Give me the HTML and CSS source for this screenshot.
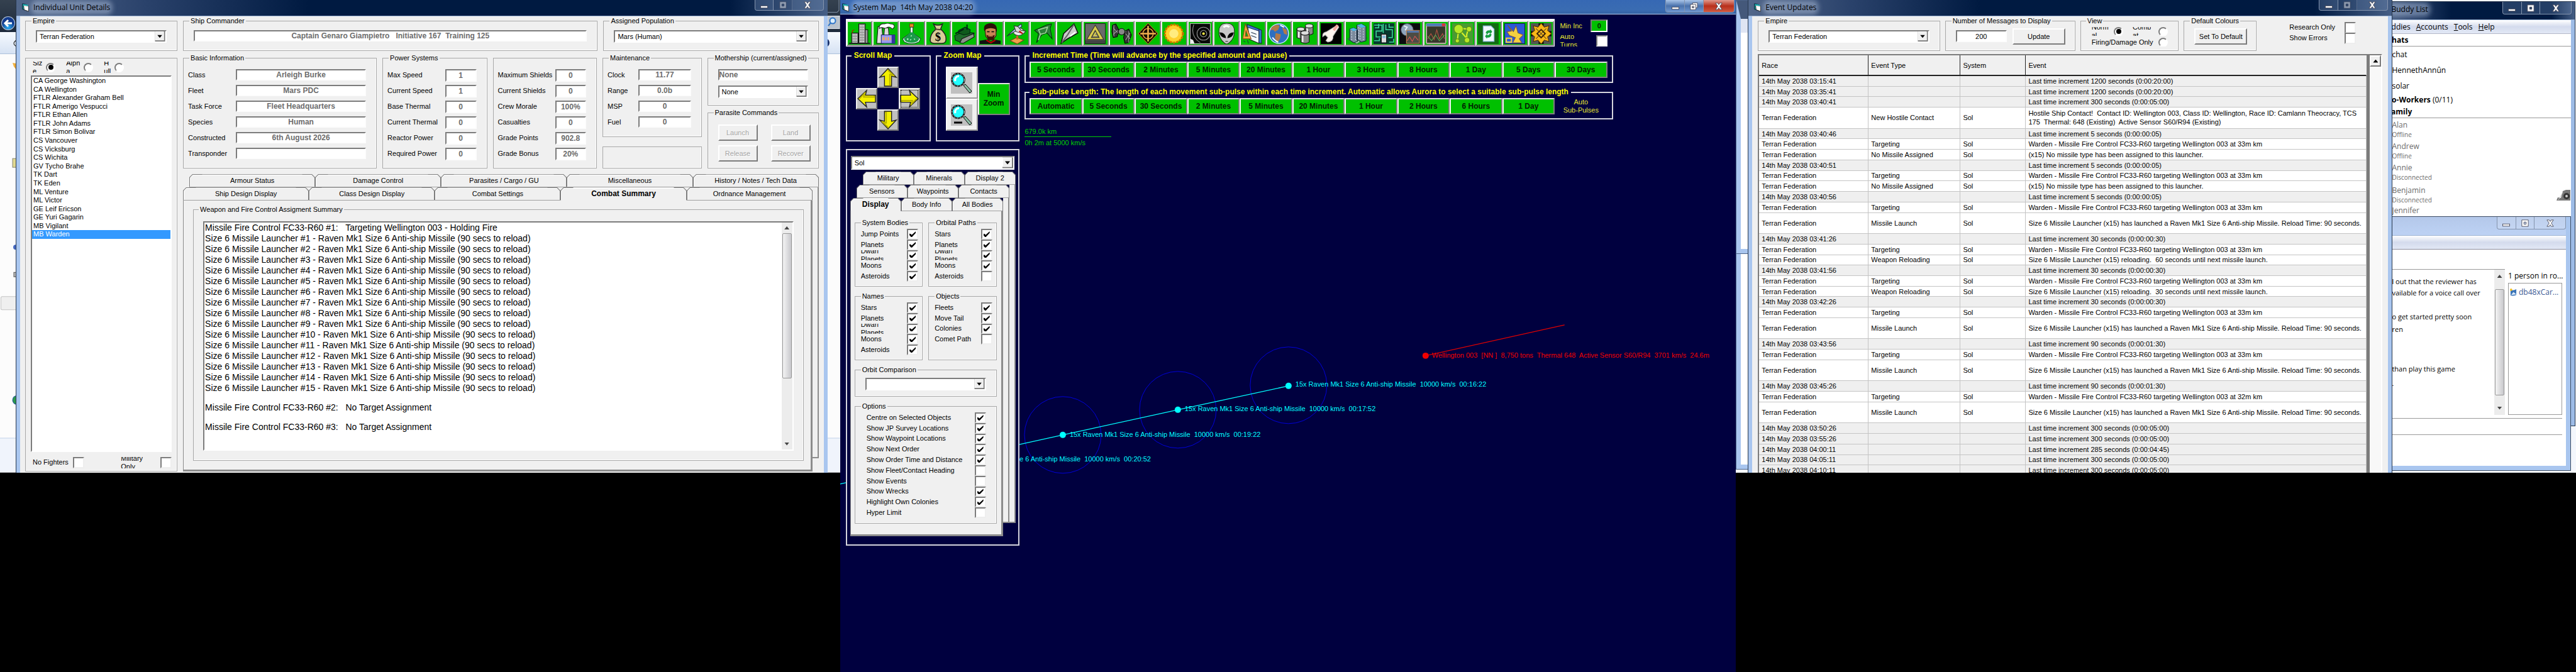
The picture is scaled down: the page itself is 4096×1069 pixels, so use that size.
FILE: index.html
```html
<!DOCTYPE html>
<html lang="en">
<head>
<meta charset="utf-8">
<title>System Map</title>
<link rel="stylesheet" href="styles.css">
</head>
<body>
<svg class="defs" width="0" height="0" aria-hidden="true">
  <symbol id="app" viewBox="0 0 16 16"><path d="M2 1l8 2v11l-8-3z" fill="#10a0a0" stroke="#012"/><path d="M4 4l9 1v10l-8-3z" fill="#fff" stroke="#222"/><path d="M3 2l9 1v2L3 4z" fill="#2cc"/></symbol>
  <symbol id="min" viewBox="0 0 20 14"><rect x="3.500" y="8.500" width="13" height="4" fill="#fff" stroke="#445"/></symbol>
  <symbol id="max" viewBox="0 0 20 14"><path fill-rule="evenodd" d="M4 1h12v12H4zM8 5v4h4V5z" fill="#fff" stroke="#445"/></symbol>
  <symbol id="restore" viewBox="0 0 20 14"><path d="M8 .5h9v9H8z" fill="#fff" stroke="#445"/><path fill-rule="evenodd" d="M4 3.500h10v10H4zM7.500 7v3h3V7z" fill="#fff" stroke="#445"/></symbol>
  <symbol id="close" viewBox="0 0 20 14"><path d="M4 1h4l2 3 2-3h4l-4 6 4 6h-4l-2-3-2 3H4l4-6z" fill="#fff" stroke="#445"/></symbol>
  <symbol id="arrow" viewBox="0 0 32 32"><path d="M16 1L30 16l-8-2v17H10V14l-8 2z" fill="#f4f000" stroke="#222" stroke-width="1.500"/><path d="M16 4l9 8-6-1v18h2" fill="none" stroke="#b8b000" stroke-width="2"/></symbol>
  <symbol id="lens" viewBox="0 0 34 34"><rect width="34" height="34" fill="#c0c0c0"/><path d="M20 21l3-2 10 11-3 3z" fill="#8fc0a8" stroke="#000"/><circle cx="11.500" cy="12" r="10" fill="#2ff" stroke="#111" stroke-width="2.500"/><circle cx="11.500" cy="12" r="10" fill="none" stroke="#ccc" stroke-width="1" stroke-dasharray="3 2"/><path d="M7 14a6 6 0 0 1 6-8" fill="none" stroke="#fff" stroke-width="3"/></symbol>
</svg>
<main class="desktop">

<section class="monitor left">
  <svg class="strip" viewBox="0 0 26 751" preserveAspectRatio="xMinYMin slice" aria-hidden="true">
    <defs><linearGradient id="bar" x2="0" y2="1"><stop stop-color="#f6faff"/><stop offset="1" stop-color="#d6e2f3"/></linearGradient>
    <linearGradient id="night" x2="0" y2="1"><stop stop-color="#35414f"/><stop offset="1" stop-color="#1d2a3c"/></linearGradient>
    <radialGradient id="orb" cy=".8"><stop stop-color="#2bb0f5"/><stop offset="1" stop-color="#123a8c"/></radialGradient></defs>
    <rect width="26" height="751" fill="#fcfcfc"/><rect width="26" height="51" fill="url(#night)"/>
    <circle cx="13" cy="37" r="10.500" fill="url(#orb)" stroke="#b8c8dc"/><path d="M19 37H8m5-5l-5 5 5 5" fill="none" stroke="#fff" stroke-width="3"/>
    <rect y="51" width="26" height="34" fill="url(#bar)"/><path d="M0 85.500h26" stroke="#a9bfda"/>
    <path d="M26 64q-8 5 0 10" fill="none" stroke="#222"/><path d="M20 100l6 1v10l-4-5z" fill="#f0b040"/>
    <rect x="20" y="252" width="6" height="14" fill="#e0d890" stroke="#887"/><circle cx="25" cy="393" r="4" fill="#4467c0"/><rect x="22" y="433" width="4" height="7" fill="#bbb" stroke="#555"/>
    <rect x="1.500" y="471.500" width="30" height="21" rx="2" fill="#efefef" stroke="#c4c4c4"/><circle cx="27" cy="636" r="7" fill="#2a9a4a" stroke="#24509c"/>
    <rect y="696" width="26" height="55" fill="#f0f4fc"/><path d="M0 696.500h26" stroke="#c3d3e8"/>
  </svg>
  <div class="window">
    <header class="titlebar navy"><svg class="appicon"><use href="#app"/></svg><h1>Individual Unit Details</h1>
      <div class="caption"><button aria-label="Minimize"><svg><use href="#min"/></svg></button><button aria-label="Maximize" disabled><svg><use href="#max"/></svg></button><button aria-label="Close"><svg><use href="#close"/></svg></button></div></header>
    <div class="unit">
      <fieldset class="one"><legend>Empire</legend><select aria-label="Empire"><option>Terran Federation</option></select></fieldset>
      <div class="top-right">
        <fieldset class="one"><legend>Ship Commander</legend><input class="val" aria-label="Ship Commander" readonly value="Captain Genaro Giampietro   Initiative 167  Training 125"></fieldset>
        <fieldset class="one"><legend>Assigned Population</legend><select aria-label="Assigned Population"><option>Mars (Human)</option></select></fieldset>
      </div>
      <div class="group ships">
        <div class="sorts">
          <label><span class="cut"><span>Siz</span><span>e</span></span><input type="radio" name="sort" checked></label>
          <label><span class="cut"><span>Alph</span><span>a</span></span><input type="radio" name="sort"></label>
          <label><span class="cut"><span>H</span><span>ull</span></span><input type="radio" name="sort"></label>
        </div>
        <div class="listbox"><ul>
          <li>CA George Washington</li><li>CA Wellington</li><li>FTLR Alexander Graham Bell</li><li>FTLR Amerigo Vespucci</li><li>FTLR Ethan Allen</li><li>FTLR John Adams</li><li>FTLR Simon Bolivar</li><li>CS Vancouver</li><li>CS Vicksburg</li><li>CS Wichita</li><li>GV Tycho Brahe</li><li>TK Dart</li><li>TK Eden</li><li>ML Venture</li><li>ML Victor</li><li>GE Leif Ericson</li><li>GE Yuri Gagarin</li><li>MB Vigilant</li><li class="selected">MB Warden</li>
        </ul></div>
        <div class="filters"><label>No Fighters<input type="checkbox"></label><label><span class="cut"><span>Military</span><span>Only</span></span><input type="checkbox"></label></div>
      </div>
      <div class="details">
        <div class="info">
          <fieldset class="rows basic"><legend>Basic Information</legend>
            <label>Class<input class="val" readonly value="Arleigh Burke"></label><label>Fleet<input class="val" readonly value="Mars PDC"></label><label>Task Force<input class="val" readonly value="Fleet Headquarters"></label><label>Species<input class="val" readonly value="Human"></label><label>Constructed<input class="val" readonly value="6th August 2026"></label><label>Transponder<input class="val" readonly value=""></label></fieldset>
          <fieldset class="rows tall"><legend>Power Systems</legend>
            <label>Max Speed<input class="val" readonly value="1"></label><label>Current Speed<input class="val" readonly value="1"></label><label>Base Thermal<input class="val" readonly value="0"></label><label>Current Thermal<input class="val" readonly value="0"></label><label>Reactor Power<input class="val" readonly value="0"></label><label>Required Power<input class="val" readonly value="0"></label></fieldset>
          <div class="group rows tall">
            <label>Maximum Shields<input class="val" readonly value="0"></label><label>Current Shields<input class="val" readonly value="0"></label><label>Crew Morale<input class="val" readonly value="100%"></label><label>Casualties<input class="val" readonly value="0"></label><label>Grade Points<input class="val" readonly value="902.8"></label><label>Grade Bonus<input class="val" readonly value="20%"></label></div>
          <div class="stack">
            <fieldset class="rows upkeep"><legend>Maintenance</legend>
              <label>Clock<input class="val" readonly value="11.77"></label><label>Range<input class="val" readonly value="0.0b"></label><label>MSP<input class="val" readonly value="0"></label><label>Fuel<input class="val" readonly value="0"></label></fieldset>
            <div class="group blank"></div>
          </div>
          <div class="stack">
            <fieldset class="mother"><legend>Mothership (current/assigned)</legend><input class="val start" aria-label="Current mothership" readonly value="None"><select aria-label="Assigned mothership"><option>None</option></select></fieldset>
            <fieldset class="parasite"><legend>Parasite Commands</legend><button class="btn" disabled>Launch</button><button class="btn" disabled>Land</button><button class="btn" disabled>Release</button><button class="btn" disabled>Recover</button></fieldset>
          </div>
        </div>
        <div class="tabset">
          <div class="tabs inset1"><button>Armour Status</button><button>Damage Control</button><button>Parasites / Cargo / GU</button><button>Miscellaneous</button><button>History / Notes / Tech Data</button></div>
          <div class="deck"><div class="sheet">
            <div class="tabs"><button>Ship Design Display</button><button>Class Design Display</button><button>Combat Settings</button><button class="on">Combat Summary</button><button>Ordnance Management</button></div>
            <div class="page combat">
              <fieldset><legend>Weapon and Fire Control Assigment Summary</legend>
                <div class="report"><ul>
                  <li>Missile Fire Control FC33-R60 #1:   Targeting Wellington 003 - Holding Fire</li>
                  <li>Size 6 Missile Launcher #1 - Raven Mk1 Size 6 Anti-ship Missile (90 secs to reload)</li>
                  <li>Size 6 Missile Launcher #2 - Raven Mk1 Size 6 Anti-ship Missile (90 secs to reload)</li>
                  <li>Size 6 Missile Launcher #3 - Raven Mk1 Size 6 Anti-ship Missile (90 secs to reload)</li>
                  <li>Size 6 Missile Launcher #4 - Raven Mk1 Size 6 Anti-ship Missile (90 secs to reload)</li>
                  <li>Size 6 Missile Launcher #5 - Raven Mk1 Size 6 Anti-ship Missile (90 secs to reload)</li>
                  <li>Size 6 Missile Launcher #6 - Raven Mk1 Size 6 Anti-ship Missile (90 secs to reload)</li>
                  <li>Size 6 Missile Launcher #7 - Raven Mk1 Size 6 Anti-ship Missile (90 secs to reload)</li>
                  <li>Size 6 Missile Launcher #8 - Raven Mk1 Size 6 Anti-ship Missile (90 secs to reload)</li>
                  <li>Size 6 Missile Launcher #9 - Raven Mk1 Size 6 Anti-ship Missile (90 secs to reload)</li>
                  <li>Size 6 Missile Launcher #10 - Raven Mk1 Size 6 Anti-ship Missile (90 secs to reload)</li>
                  <li>Size 6 Missile Launcher #11 - Raven Mk1 Size 6 Anti-ship Missile (90 secs to reload)</li>
                  <li>Size 6 Missile Launcher #12 - Raven Mk1 Size 6 Anti-ship Missile (90 secs to reload)</li>
                  <li>Size 6 Missile Launcher #13 - Raven Mk1 Size 6 Anti-ship Missile (90 secs to reload)</li>
                  <li>Size 6 Missile Launcher #14 - Raven Mk1 Size 6 Anti-ship Missile (90 secs to reload)</li>
                  <li>Size 6 Missile Launcher #15 - Raven Mk1 Size 6 Anti-ship Missile (90 secs to reload)</li>
                  <li></li>
                  <li>Missile Fire Control FC33-R60 #2:   No Target Assignment</li>
                  <li></li>
                  <li>Missile Fire Control FC33-R60 #3:   No Target Assignment</li>
                </ul><div class="scroll"><b class="up"></b><div class="thumb"></div><b class="down"></b></div></div>
              </fieldset>
            </div>
          </div><div class="edge"></div></div>
        </div>
      </div>
    </div>
  </div>
  <svg class="strip" viewBox="0 0 20 751" preserveAspectRatio="xMinYMin slice" aria-hidden="true">
    <rect width="20" height="751" fill="#fcfcfc"/><rect width="20" height="51" fill="url(#night)"/><path d="M0 19.500h15l3-3V0" fill="none" stroke="#8090a4"/>
    <rect x="0" y="25.500" width="19" height="20" fill="#b9c2cd" stroke="#e4e8ee"/><circle cx="8" cy="33" r="4.500" fill="#dbeefc" stroke="#2e74c8" stroke-width="2"/><path d="M5 36l-4 5" stroke="#2e74c8" stroke-width="2"/>
    <rect y="51" width="20" height="34" fill="url(#bar)"/><circle cx="-4" cy="68" r="7" fill="#16306c"/><path d="M0 85.500h20" stroke="#a9bfda"/>
    <rect y="696" width="20" height="55" fill="#f0f4fc"/><path d="M0 696.500h20" stroke="#c3d3e8"/>
  </svg>
</section>

<section class="monitor map">
  <svg class="chart" viewBox="0 0 1425 1069" preserveAspectRatio="xMinYMin meet">
    <g fill="none" stroke="#0000d8"><circle cx="354" cy="692" r="61"/><circle cx="537" cy="652" r="61"/><circle cx="713" cy="613" r="61"/></g>
    <path d="M0 770L354 692 537 652 713 614" fill="none" stroke="#0ff" stroke-width="1.300"/>
    <path d="M931 566L1152 517" stroke="#e00000" stroke-width="1.300"/>
    <g fill="#0ff"><circle cx="354" cy="692" r="5"/><circle cx="537" cy="652" r="5"/><circle cx="713" cy="614" r="5"/>
    <text x="724" y="615">15x Raven Mk1 Size 6 Anti-ship Missile  10000 km/s  00:16:22</text>
    <text x="548" y="654">15x Raven Mk1 Size 6 Anti-ship Missile  10000 km/s  00:17:52</text>
    <text x="365" y="695">15x Raven Mk1 Size 6 Anti-ship Missile  10000 km/s  00:19:22</text>
    <text x="494" y="734" text-anchor="end">e 6 Anti-ship Missile  10000 km/s  00:20:52</text></g>
    <g fill="#f00000"><circle cx="931" cy="566" r="5"/><text x="941" y="569">Wellington 003  [NN ]  8,750 tons  Thermal 648  Active Sensor S60/R94  3701 km/s  24.6m</text></g>
  </svg>
  <header class="titlebar sky"><svg class="appicon"><use href="#app"/></svg><h1>System Map  14th May 2038 04:20</h1>
    <div class="caption lit"><button aria-label="Minimize"><svg><use href="#min"/></svg></button><button aria-label="Restore"><svg><use href="#restore"/></svg></button><button class="red" aria-label="Close"><svg><use href="#close"/></svg></button></div></header>
  <div class="space">
    <div class="bar-row">
      <nav class="toolbar">
        <button aria-label="Population"><svg viewBox="0 0 32 32"><path d="M15 1h10v30H15zM4 15h10v16H4zM25 10h4v21h-4z" fill="#999" stroke="#111"/><path d="M17.500 3v27M20 3v27M22.500 3v27M6.500 17v13M9 17v13M11.500 17v13" stroke="#fff" stroke-dasharray="2 2"/><path d="M0 31h32" stroke="#222" stroke-width="2"/><path d="M5 15v-3l3-2" stroke="#c00" fill="none"/></svg></button>
        <button aria-label="Industry"><svg viewBox="0 0 32 32"><path d="M4 5h6l2 26H2zM14 7h6l1 14h-8z" fill="#ddd" stroke="#111"/><path d="M6 5q2-5 8-4 5-2 9 0 7 0 6 5l-3 3q-3-4-7-3-4 3-7 1-3-1-6 1z" fill="#fff" stroke="#222"/><path d="M9 18h21v13H9z" fill="#9a9af0" stroke="#22226a"/><path d="M25 18h5v13h-5z" fill="#3434a0"/><path d="M11 24h13" stroke="#ffb040" stroke-width="5" stroke-dasharray="2 2"/></svg></button>
        <button aria-label="Research"><svg viewBox="0 0 32 32"><path d="M13 1h6v5h-6z" fill="#e88820" stroke="#732"/><path d="M14 6v9L2 24l3 5q11 5 22 0l3-5-12-9V6z" fill="#e6fff0" stroke="#243"/><path d="M14 14L4 24l3 4q9 4 18 0l3-4-10-10z" fill="#1a9a48"/><path d="M9 24l2 1m4-6l1 1m4 5l1-1m-7 1l1 1" stroke="#bfc" stroke-width="2"/></svg></button>
        <button aria-label="Wealth"><svg viewBox="0 0 32 32"><path d="M9 1q7 4 14 0l-3 8q10 8 8 18-1 4-6 4H10q-6 0-6-5Q4 16 13 9z" fill="#d8cc98" stroke="#222" stroke-width="1.500"/><path d="M11 9l9 1" stroke="#543" stroke-width="2"/><text x="16" y="27" text-anchor="middle" font-size="18" font-weight="bold" font-family="Liberation Serif, serif">$</text></svg></button>
        <button aria-label="Ground Units"><svg viewBox="0 0 32 32"><path d="M1 19l13-6 17 2-1 6-18 9-10-4z" fill="#1d6a2a" stroke="#021"/><path d="M12 24l18-8 1 5-17 10-5-1z" fill="#8a938a" stroke="#111"/><path d="M7 11l10-5 8 4-1 6-9 2-8-3z" fill="#0e5a1c" stroke="#021"/><path d="M15 9L2 16M20 2v8" stroke="#021" stroke-width="2"/></svg></button>
        <button aria-label="Officers"><svg viewBox="0 0 32 32"><path d="M8 10q0-9 9-9 8 1 8 10v8l-4 6h-8l-4-5z" fill="#c98455" stroke="#2a1208"/><path d="M7 12Q4 1 16 0q12 0 10 14l-2-5q-7-3-14 0z" fill="#2c0c08"/><path d="M10 18q7 3 13 0l-2 8h-8z" fill="#3a1208"/><path d="M13 20h7" stroke="#c98455"/><path d="M11 13h4m3 0h4" stroke="#000" stroke-width="1.500"/><path d="M0 32v-5l12-2 5 3 5-3 10 2v5z" fill="#111"/><path d="M10 26l7 4 7-4" stroke="#b00" fill="none" stroke-width="2"/></svg></button>
        <button aria-label="Fighters"><svg viewBox="0 0 32 32"><path d="M6 27l10-5 11 4-10 6z" fill="#f0a048" stroke="#742"/><path d="M17 16v9" stroke="#c66a20" stroke-width="3"/><ellipse cx="19" cy="13" rx="8" ry="6" fill="#eee" stroke="#444"/><path d="M1 20L16 6l7-5 1 4-8 6z" fill="#a8cff0" stroke="#223"/><path d="M12 4l6 1 5 6 7 1-3 4-12-3z" fill="#d8d8d8" stroke="#333"/><path d="M20 12l5 4" stroke="#c00" stroke-width="2"/></svg></button>
        <button aria-label="Ship Design"><svg viewBox="0 0 32 32"><path d="M3 11L21 3l8-2-2 7 3 16-8-9-8 3-8 12 3-14z" fill="#2f7d3c" stroke="#042a0c"/><path d="M9 10l14-4-3 9-8 2zM9 26l3-9" fill="none" stroke="#a5d6a0" stroke-width="1.500"/></svg></button>
        <button aria-label="Fleets"><svg viewBox="0 0 32 32"><path d="M24 1l6 14-16 9-10 7 4-15z" fill="#ccc" stroke="#111" stroke-width="1.500"/><path d="M24 2L14 18 5 30" fill="none" stroke="#666" stroke-width="2"/><path d="M18 20l8-6" stroke="#fff" stroke-width="2"/></svg></button>
        <button aria-label="Task Groups"><svg viewBox="0 0 32 32"><rect x=".5" y=".5" width="31" height="31" fill="#6a6a6a" stroke="#222"/><path d="M1 26h30v5H1z" fill="#444"/><path fill-rule="evenodd" d="M16 3l13 22H3zM16 11l-6 11h12z" fill="#d8cc50" stroke="#332"/><path d="M17 14l-3 5h5" fill="none" stroke="#d8cc50" stroke-width="2"/></svg></button>
        <button aria-label="Squadrons"><svg viewBox="0 0 32 32"><path d="M2 3l5-2 5 10-3 10-6 1-2-9zM21 12l6-3 4 9-4 12-6 1-2-9z" fill="#333" stroke="#000"/><path d="M3 7l7 8M3 17l7-6M22 16l7 8m-7 2l7-11M4 3v17M27 12v18" stroke="#aaa"/><path d="M9 13h14" stroke="#555" stroke-width="3"/><circle cx="16" cy="13" r="5" fill="#888" stroke="#111"/></svg></button>
        <button aria-label="Combat"><svg viewBox="0 0 32 32"><path d="M16 0l15 16-15 16L1 16z" fill="#160c00" stroke="#b87820"/><circle cx="16" cy="16" r="8" fill="none" stroke="#e8a040" stroke-width="1.500"/><path d="M16 4v24M4 16h24" stroke="#f0b050" stroke-width="2.500"/></svg></button>
        <button aria-label="System View"><svg viewBox="0 0 32 32"><circle cx="16" cy="16" r="14" fill="#f8b800" stroke="#c87000" stroke-width="3" stroke-dasharray="3 2"/><circle cx="16" cy="16" r="12" fill="#ffd030"/><circle cx="16" cy="16" r="7" fill="#ffec80"/></svg></button>
        <button aria-label="Galactic Map"><svg viewBox="0 0 32 32"><rect x=".5" y=".5" width="31" height="31" fill="#080808" stroke="#bbb"/><g fill="none" stroke="#999"><circle cx="21" cy="16" r="5"/><circle cx="21" cy="16" r="10"/><path d="M6 2q-6 18 10 28"/></g><circle cx="21" cy="16" r="2" fill="#fe4"/><path d="M1 31v-7l4 2 2 5z" fill="#eee"/></svg></button>
        <button aria-label="Aliens"><svg viewBox="0 0 32 32"><path d="M16 0q12 0 12 13 0 10-8 17-4 4-8 0-8-7-8-17Q4 0 16 0z" fill="#c8c8c8" stroke="#222"/><path d="M11 6q5-4 9 0" stroke="#fff" stroke-width="3" fill="none"/><path d="M5 14q9 0 10 9-9-1-10-9zM27 14q-9 0-10 9 9-1 10-9z" fill="#000"/><path d="M14 28h4" stroke="#222"/></svg></button>
        <button aria-label="Class Design"><svg viewBox="0 0 32 32"><path d="M8 2l18 7v22L12 25z" fill="#f4f8ff" stroke="#222"/><path d="M8 2l18 7v3L8 6zM26 9l4 2v20l-4-1z" fill="#3b78d0" stroke="#224"/><path fill-rule="evenodd" d="M5 1l9 23H1zM6 11l-1 9h4z" fill="#f4a83c" stroke="#842"/><path d="M2 27l3 2m3-3l2 5M14 14l8 3m-8 2l8 3" stroke="#234"/></svg></button>
        <button aria-label="Planets"><svg viewBox="0 0 32 32"><circle cx="16" cy="16" r="15" fill="#2d6fc0" stroke="#bfe0ff" stroke-width="1.500"/><path d="M5 6q8-6 12-2l-2 6-5 3-3-3-4 1zM11 15l8 2-1 6-4 7-4-7zM21 6l7 4 1 8-5-2z" fill="#b27a48"/><path d="M6 22q5 6 9 7M18 3l6 3" stroke="#fff" stroke-width="2"/></svg></button>
        <button aria-label="Minerals"><svg viewBox="0 0 32 32"><g fill="#888" stroke="#111"><path d="M16 4v12q6 4 12 0V4zM3 9v13q6 4 12 0V9z"/><ellipse cx="22" cy="4" rx="6" ry="3" fill="#ddd"/><ellipse cx="9" cy="9" rx="6" ry="3" fill="#ddd"/><path d="M9 16v13q7 4 13 0V16z"/><ellipse cx="15.500" cy="15" rx="6.500" ry="3.500" fill="#ddd"/></g><path d="M12 19v10M6 13v9M19 8v5" stroke="#fff" stroke-width="2"/></svg></button>
        <button aria-label="Tech"><svg viewBox="0 0 32 32"><rect width="32" height="32"/><path d="M22 5l4-2 2 3-9 14q1 8-8 9l-3-2 3-5-4-4-4 3q-1-7 6-8z" fill="#fff5ee" stroke="#aaa"/><path d="M20 11l6-8" stroke="#f4a8a0" stroke-width="4"/></svg></button>
        <button aria-label="Shipyards"><svg viewBox="0 0 32 32"><path d="M1 24l17-5 12 4-15 9z" fill="#9ad0a0" stroke="#264"/><path d="M15 3l7-2 7 4v22l-7 2-7-4zM4 9l6-2 6 3v18l-6 2-6-4z" fill="#7c8a9c" stroke="#123"/><path d="M15 3l7-2 7 4-7 2zM4 9l6-2 6 3-6 2z" fill="#4cb8e8"/><path d="M17.500 6v18M20 7v20M25 8v20M7 12v15M13 12v15" stroke="#dfe8f4" stroke-dasharray="2 2"/></svg></button>
        <button aria-label="Intelligence"><svg viewBox="0 0 32 32"><rect width="32" height="32" fill="#07382e"/><path d="M1 3h12v9H4v9h7M19 2v8h10v12h-6M8 1v6H2M24 1v5h7M1 27h8v-4M24 29h7v-5M15 1v14" fill="none" stroke="#3cd89a" stroke-width="1.500"/><path d="M12 17h8v13h-8z" fill="#ddd" stroke="#111"/><path d="M13.500 19h5v4h-5z" fill="#8bd"/></svg></button>
        <button aria-label="Survey"><svg viewBox="0 0 32 32"><rect width="32" height="32" fill="#0c0c10"/><circle cx="12" cy="10" r="9.500" fill="#8fa4bc" stroke="#445"/><path d="M7 4l5 2-3 5" stroke="#e4eef8" stroke-width="2" fill="none"/><rect x="11" y="11" width="20" height="20" fill="#4c4c44" stroke="#c85"/><path d="M12 13h18" stroke="#57a" stroke-width="3"/><path d="M12 27l4-6 4 7 4-8 5 6" fill="none" stroke="#d55"/></svg></button>
        <button aria-label="Statistics"><svg viewBox="0 0 32 32"><rect width="32" height="32" rx="3" fill="#b8a8a0"/><rect x="2" y="5" width="28" height="25" fill="#38382c"/><path d="M1 2.500h30" stroke="#4c78b8" stroke-width="4"/><path d="M25 2.500h5" stroke="#d33" stroke-width="4"/><path d="M3 24l5-8 5 9 4-15 4 14 5-8 3 8" fill="none" stroke="#b54"/><path d="M3 20l6 7 6-9 6 9 8-9" fill="none" stroke="#5a5"/></svg></button>
        <button aria-label="Jump Points"><svg viewBox="0 0 32 32"><rect width="32" height="32" fill="#4a9a34"/><path d="M10 9L8 27M10 9l14 16M12 8l14 1M26 9q-6 8-2 17" stroke="#d8f028" stroke-width="2" fill="none"/><g fill="#b8e828" stroke="#5a8a10"><circle cx="10" cy="9" r="7"/><circle cx="26" cy="9" r="4"/><circle cx="8" cy="27" r="3"/><circle cx="23" cy="26" r="4"/></g></svg></button>
        <button aria-label="Refresh"><svg viewBox="0 0 32 32"><rect width="32" height="32" fill="#126a12"/><path d="M8 4h12l5 5v19H8z" fill="#f0f8ff" stroke="#8cb4dc"/><path d="M12 15q1-5 7-4v-2l3 4-3 4v-2q-4-1-4 2M21 17q-1 6-7 5v2l-3-4 3-4v2q4 1 4-2" fill="#16a040"/></svg></button>
        <button aria-label="Sensors"><svg viewBox="0 0 32 32"><rect x=".5" y=".5" width="31" height="31" fill="#2c58d8" stroke="#124"/><path d="M5 3l9 10 4-9 3 11 8 3-6 6 4 6H13l4-8-9-3-4-6 7-1z" fill="#f4d040" stroke="#754"/><path d="M3 23h8v6H3z" fill="none" stroke="#f4d040" stroke-width="2"/></svg></button>
        <button aria-label="Race"><svg viewBox="0 0 32 32"><rect width="32" height="32" fill="#555"/><path d="M12 0h8v32h-8zM0 12h32v8H0z" fill="#111"/><path fill-rule="evenodd" d="M16 0l5 6 7-2-2 7 6 5-6 5 2 7-7-2-5 6-5-6-7 2 2-7-6-5 6-5-2-7 7 2zM16 9l-7 7 7 7 7-7z" fill="#f8b818" stroke="#542c00"/><path d="M16 11l5 5-5 5-5-5z" fill="#f8b818"/><path d="M8 8l16 16M24 8L8 24" stroke="#432"/></svg></button>
      </nav>
      <div class="turns">
        <label>Min Inc<input class="inc" value="0"></label>
        <label><span class="cut"><span>Auto</span><span>Turns</span></span><input type="checkbox"></label>
      </div>
    </div>
    <div class="controls">
      <fieldset class="frame pad"><legend>Scroll Map</legend><div class="cross">
        <button class="n" aria-label="Up"><svg viewBox="0 0 32 32"><use href="#arrow"/></svg></button>
        <button class="w" aria-label="Left"><svg viewBox="0 0 32 32"><use href="#arrow" transform="rotate(-90 16 16)"/></svg></button>
        <button class="e" aria-label="Right"><svg viewBox="0 0 32 32"><use href="#arrow" transform="rotate(90 16 16)"/></svg></button>
        <button class="s" aria-label="Down"><svg viewBox="0 0 32 32"><use href="#arrow" transform="rotate(180 16 16)"/></svg></button></div></fieldset>
      <fieldset class="frame pad"><legend>Zoom Map</legend><div class="zoom">
        <div class="lenses"><button aria-label="Zoom in"><svg viewBox="0 0 34 34"><use href="#lens"/></svg></button><button aria-label="Zoom out"><svg viewBox="0 0 34 34"><use href="#lens"/><path d="M5 29h13" stroke="#000" stroke-width="3"/></svg></button></div>
        <button class="green">Min<br>Zoom</button></div></fieldset>
      <div class="times">
        <fieldset class="frame"><legend>Increment Time (Time will advance by the specified amount and pause)</legend><div class="eleven">
          <button class="green">5 Seconds</button><button class="green">30 Seconds</button><button class="green">2 Minutes</button><button class="green">5 Minutes</button><button class="green">20 Minutes</button><button class="green">1 Hour</button><button class="green">3 Hours</button><button class="green">8 Hours</button><button class="green">1 Day</button><button class="green">5 Days</button><button class="green">30 Days</button></div></fieldset>
        <fieldset class="frame"><legend>Sub-pulse Length: The length of each movement sub-pulse within each time increment. Automatic allows Aurora to select a suitable sub-pulse length</legend><div class="eleven">
          <button class="green">Automatic</button><button class="green">5 Seconds</button><button class="green">30 Seconds</button><button class="green">2 Minutes</button><button class="green">5 Minutes</button><button class="green">20 Minutes</button><button class="green">1 Hour</button><button class="green">2 Hours</button><button class="green">6 Hours</button><button class="green">1 Day</button><span class="auto">Auto<br>Sub-Pulses</span></div></fieldset>
        <div class="scale"><p>679.0k km</p><p>0h 2m at 5000 km/s</p></div>
      </div>
    </div>
    <aside class="side">
      <select aria-label="System"><option>Sol</option></select>
      <div class="tabs inset2"><button>Military</button><button>Minerals</button><button>Display 2</button></div>
      <div class="deck"><div class="sheet">
        <div class="tabs inset1"><button>Sensors</button><button>Waypoints</button><button>Contacts</button></div>
        <div class="deck"><div class="sheet">
          <div class="tabs"><button class="on">Display</button><button>Body Info</button><button>All Bodies</button></div>
          <div class="page display">
            <fieldset class="checks"><legend>System Bodies</legend><div>
              <label>Jump Points<input type="checkbox" checked></label><label>Planets<input type="checkbox" checked></label><label><span class="cut"><span>Dwarf</span><span>Planets</span></span><input type="checkbox" checked></label><label>Moons<input type="checkbox" checked></label><label>Asteroids<input type="checkbox" checked></label></div></fieldset>
            <fieldset class="checks"><legend>Orbital Paths</legend><div>
              <label>Stars<input type="checkbox" checked></label><label>Planets<input type="checkbox" checked></label><label><span class="cut"><span>Dwarf</span><span>Planets</span></span><input type="checkbox" checked></label><label>Moons<input type="checkbox" checked></label><label>Asteroids<input type="checkbox"></label></div></fieldset>
            <fieldset class="checks"><legend>Names</legend><div>
              <label>Stars<input type="checkbox" checked></label><label>Planets<input type="checkbox" checked></label><label><span class="cut"><span>Dwarf</span><span>Planets</span></span><input type="checkbox" checked></label><label>Moons<input type="checkbox" checked></label><label>Asteroids<input type="checkbox" checked></label></div></fieldset>
            <fieldset class="checks"><legend>Objects</legend><div>
              <label>Fleets<input type="checkbox" checked></label><label>Move Tail<input type="checkbox" checked></label><label>Colonies<input type="checkbox" checked></label><label>Comet Path<input type="checkbox"></label></div></fieldset>
            <fieldset class="wide orbit"><legend>Orbit Comparison</legend><select aria-label="Orbit Comparison"><option></option></select></fieldset>
            <fieldset class="wide checks options"><legend>Options</legend><div>
              <label>Centre on Selected Objects<input type="checkbox" checked></label><label>Show JP Survey Locations<input type="checkbox" checked></label><label>Show Waypoint Locations<input type="checkbox" checked></label><label>Show Next Order<input type="checkbox" checked></label><label>Show Order Time and Distance<input type="checkbox" checked></label><label>Show Fleet/Contact Heading<input type="checkbox"></label><label>Show Events<input type="checkbox"></label><label>Show Wrecks<input type="checkbox" checked></label><label>Highlight Own Colonies<input type="checkbox" checked></label><label>Hyper Limit<input type="checkbox"></label></div></fieldset>
          </div>
        </div><div class="edge"></div></div>
      </div><div class="edge"></div></div>
    </aside>
  </div>
</section>

<section class="monitor right">
  <div class="behind one-up"><div></div></div>
  <div class="behind two-up"><div></div></div>
  <div class="buddy">
    <header class="titlebar navy"><h1>Buddy List</h1>
      <div class="caption"><button aria-label="Minimize"><svg><use href="#min"/></svg></button><button aria-label="Maximize"><svg><use href="#max"/></svg></button><button aria-label="Close"><svg><use href="#close"/></svg></button></div></header>
    <div class="pane">
      <nav class="menu"><a href="#">Buddies</a><a href="#"><u>A</u>ccounts</a><a href="#"><u>T</u>ools</a><a href="#"><u>H</u>elp</a></nav>
      <h2 class="ruled">Chats</h2>
      <p class="chan">chat</p><p class="chan">HennethAnnûn</p><p class="chan">solar</p>
      <h2>Co-Workers <span>(0/11)</span></h2>
      <h2 class="ruled">Family</h2>
      <ul class="people">
        <li>Alan<small>Offline</small></li><li>Andrew<small>Offline</small></li><li>Annie<small>Disconnected</small></li>
        <li class="pic"><div>Benjamin<small>Disconnected</small></div><svg viewBox="0 0 22 17"><path d="M0 17l2-5 5 1L10 2l5-2h7v17z" fill="#777"/><circle cx="16" cy="10" r="5" fill="#333"/><circle cx="16" cy="10" r="2" fill="#ccc"/><path d="M3 16l7-12" stroke="#ccc"/></svg></li>
        <li>Jennifer</li>
      </ul>
    </div>
  </div>
  <div class="talk">
    <header class="titlebar pale"><div class="caption"><button aria-label="Minimize"><svg><use href="#min"/></svg></button><button aria-label="Maximize"><svg><use href="#max"/></svg></button><button aria-label="Close"><svg><use href="#close"/></svg></button></div></header>
    <div class="pane">
      <div class="menubar"></div>
      <div class="room">
        <div class="log"><div class="lines"><p>l out that the reviewer has<br>vailable for a voice call over</p><p>o get started pretty soon</p><p>ren</p><p>than play this game</p><p>.</p></div>
          <div class="scroll"><b class="up"></b><div class="thumb"></div><b class="down"></b></div></div>
        <div class="who"><p>1 person in ro...</p><ul><li><svg viewBox="0 0 12 14"><path d="M1 2q5 2 10-1v10q-5 2-10 1z" fill="#3b74b8"/><path d="M2 11l4-5 5 4" fill="#dceaf8"/><circle cx="2" cy="2" r="2" fill="#f4c020"/></svg>db48xCar...</li></ul></div>
      </div>
      <div class="tools"></div>
      <div class="entry"></div>
    </div>
  </div>
  <div class="window events">
    <header class="titlebar navy"><svg class="appicon"><use href="#app"/></svg><h1>Event Updates</h1>
      <div class="caption"><button aria-label="Minimize"><svg><use href="#min"/></svg></button><button aria-label="Maximize" disabled><svg><use href="#max"/></svg></button><button aria-label="Close"><svg><use href="#close"/></svg></button></div></header>
    <div class="updates">
      <div class="heads">
        <fieldset class="one"><legend>Empire</legend><select aria-label="Empire"><option>Terran Federation</option></select></fieldset>
        <fieldset class="count"><legend>Number of Messages to Display</legend><input class="num" aria-label="Number of Messages to Display" value="200"><button class="btn">Update</button></fieldset>
        <fieldset class="view"><legend>View</legend>
          <label><span class="cut"><span>Norm</span><span>al</span></span><input type="radio" name="view" checked></label><label><span class="cut"><span>Comb</span><span>at</span></span><input type="radio" name="view"></label><label class="full">Firing/Damage Only<input type="radio" name="view"></label></fieldset>
        <fieldset class="count"><legend>Default Colours</legend><button class="btn">Set To Default</button></fieldset>
        <div class="flags"><label>Research Only<input type="checkbox"></label><label>Show Errors<input type="checkbox"></label></div>
      </div>
      <div class="gridbox">
        <table>
          <thead><tr><th>Race</th><th>Event Type</th><th>System</th><th>Event</th></tr></thead>
          <tbody>
          <tr class="t"><td>14th May 2038 03:15:41</td><td></td><td></td><td>Last time increment 1200 seconds (0:00:20:00)</td></tr>
          <tr class="t"><td>14th May 2038 03:35:41</td><td></td><td></td><td>Last time increment 1200 seconds (0:00:20:00)</td></tr>
          <tr class="t"><td>14th May 2038 03:40:41</td><td></td><td></td><td>Last time increment 300 seconds (0:00:05:00)</td></tr>
          <tr class="d"><td>Terran Federation</td><td>New Hostile Contact</td><td>Sol</td><td>Hostile Ship Contact!  Contact ID: Wellington 003, Class ID: Wellington, Race ID: Camlann Theocracy, TCS<br>175  Thermal: 648 (Existing)  Active Sensor S60/R94 (Existing)</td></tr>
          <tr class="t"><td>14th May 2038 03:40:46</td><td></td><td></td><td>Last time increment 5 seconds (0:00:00:05)</td></tr>
          <tr><td>Terran Federation</td><td>Targeting</td><td>Sol</td><td>Warden - Missile Fire Control FC33-R60 targeting Wellington 003 at 33m km</td></tr>
          <tr><td>Terran Federation</td><td>No Missile Assigned</td><td>Sol</td><td>(x15) No missile type has been assigned to this launcher.</td></tr>
          <tr class="t"><td>14th May 2038 03:40:51</td><td></td><td></td><td>Last time increment 5 seconds (0:00:00:05)</td></tr>
          <tr><td>Terran Federation</td><td>Targeting</td><td>Sol</td><td>Warden - Missile Fire Control FC33-R60 targeting Wellington 003 at 33m km</td></tr>
          <tr><td>Terran Federation</td><td>No Missile Assigned</td><td>Sol</td><td>(x15) No missile type has been assigned to this launcher.</td></tr>
          <tr class="t"><td>14th May 2038 03:40:56</td><td></td><td></td><td>Last time increment 5 seconds (0:00:00:05)</td></tr>
          <tr><td>Terran Federation</td><td>Targeting</td><td>Sol</td><td>Warden - Missile Fire Control FC33-R60 targeting Wellington 003 at 33m km</td></tr>
          <tr class="d"><td>Terran Federation</td><td>Missile Launch</td><td>Sol</td><td>Size 6 Missile Launcher (x15) has launched a Raven Mk1 Size 6 Anti-ship Missile. Reload Time: 90 seconds.</td></tr>
          <tr class="t"><td>14th May 2038 03:41:26</td><td></td><td></td><td>Last time increment 30 seconds (0:00:00:30)</td></tr>
          <tr><td>Terran Federation</td><td>Targeting</td><td>Sol</td><td>Warden - Missile Fire Control FC33-R60 targeting Wellington 003 at 33m km</td></tr>
          <tr><td>Terran Federation</td><td>Weapon Reloading</td><td>Sol</td><td>Size 6 Missile Launcher (x15) reloading.  60 seconds until next missile launch.</td></tr>
          <tr class="t"><td>14th May 2038 03:41:56</td><td></td><td></td><td>Last time increment 30 seconds (0:00:00:30)</td></tr>
          <tr><td>Terran Federation</td><td>Targeting</td><td>Sol</td><td>Warden - Missile Fire Control FC33-R60 targeting Wellington 003 at 33m km</td></tr>
          <tr><td>Terran Federation</td><td>Weapon Reloading</td><td>Sol</td><td>Size 6 Missile Launcher (x15) reloading.  30 seconds until next missile launch.</td></tr>
          <tr class="t"><td>14th May 2038 03:42:26</td><td></td><td></td><td>Last time increment 30 seconds (0:00:00:30)</td></tr>
          <tr><td>Terran Federation</td><td>Targeting</td><td>Sol</td><td>Warden - Missile Fire Control FC33-R60 targeting Wellington 003 at 33m km</td></tr>
          <tr class="d"><td>Terran Federation</td><td>Missile Launch</td><td>Sol</td><td>Size 6 Missile Launcher (x15) has launched a Raven Mk1 Size 6 Anti-ship Missile. Reload Time: 90 seconds.</td></tr>
          <tr class="t"><td>14th May 2038 03:43:56</td><td></td><td></td><td>Last time increment 90 seconds (0:00:01:30)</td></tr>
          <tr><td>Terran Federation</td><td>Targeting</td><td>Sol</td><td>Warden - Missile Fire Control FC33-R60 targeting Wellington 003 at 33m km</td></tr>
          <tr class="d"><td>Terran Federation</td><td>Missile Launch</td><td>Sol</td><td>Size 6 Missile Launcher (x15) has launched a Raven Mk1 Size 6 Anti-ship Missile. Reload Time: 90 seconds.</td></tr>
          <tr class="t"><td>14th May 2038 03:45:26</td><td></td><td></td><td>Last time increment 90 seconds (0:00:01:30)</td></tr>
          <tr><td>Terran Federation</td><td>Targeting</td><td>Sol</td><td>Warden - Missile Fire Control FC33-R60 targeting Wellington 003 at 32m km</td></tr>
          <tr class="d"><td>Terran Federation</td><td>Missile Launch</td><td>Sol</td><td>Size 6 Missile Launcher (x15) has launched a Raven Mk1 Size 6 Anti-ship Missile. Reload Time: 90 seconds.</td></tr>
          <tr class="t"><td>14th May 2038 03:50:26</td><td></td><td></td><td>Last time increment 300 seconds (0:00:05:00)</td></tr>
          <tr class="t"><td>14th May 2038 03:55:26</td><td></td><td></td><td>Last time increment 300 seconds (0:00:05:00)</td></tr>
          <tr class="t"><td>14th May 2038 04:00:11</td><td></td><td></td><td>Last time increment 285 seconds (0:00:04:45)</td></tr>
          <tr class="t"><td>14th May 2038 04:05:11</td><td></td><td></td><td>Last time increment 300 seconds (0:00:05:00)</td></tr>
          <tr class="t"><td>14th May 2038 04:10:11</td><td></td><td></td><td>Last time increment 300 seconds (0:00:05:00)</td></tr>
          </tbody>
        </table>
        <div class="classic"><button class="btn" aria-label="Scroll up"><b class="up"></b></button></div>
      </div>
    </div>
  </div>
</section>
</main>
</body>
</html>
```
FILE: styles.css
```css
* { box-sizing: border-box; margin: 0; padding: 0; }
body { background: #000; color: #000; font: 11px/13px "Liberation Sans", Arial, sans-serif; }
button, input, select { font: inherit; color: inherit; border-radius: 0; }
ul { list-style: none; }
svg { display: block; }
.defs { position: absolute; }
fieldset { min-width: 0; border: 1px solid #a8a8a8; box-shadow: inset -1px -1px #fff; }
legend { padding: 0 2px; line-height: 13px; white-space: nowrap; }

/* three monitors side by side */
.desktop { display: grid; grid-template-columns: 1920fr 2048fr 1920fr; height: 100vh; overflow: hidden; }
.monitor { position: relative; overflow: hidden; min-width: 0; }
.left, .right { height: 70.3%; }
.left { display: grid; grid-template-columns: 26px minmax(0, 1fr) 20px; }
.strip { width: 100%; height: 100%; }

/* window chrome */
.window { display: flex; flex-direction: column; min-width: 0; height: 100%; border: solid #a9c6ef; border-width: 0 6px; outline: 1px solid #26364c; background: #f0f0f0; }
.titlebar { display: flex; align-items: flex-start; gap: 5px; height: 26px; padding-left: 2px; border-bottom: 1px solid #9db4d4; }
.window > .titlebar { margin: 0 -6px; padding: 0 6px 0 8px; }
.navy { background: linear-gradient(90deg, #52678a 0, #2a426b 16%, #001a41 36%, #001a41 88%, #465f86 100%); }
.titlebar h1 { font: 12px/24px "Open Sans", "Noto Sans", sans-serif; white-space: pre; }
.navy h1, .sky h1 { background: rgba(200, 215, 240, .38); box-shadow: 0 0 7px 4px rgba(200, 215, 240, .38); line-height: 16px; margin-top: 4px; border-radius: 6px; }
.appicon { width: 14px; height: 14px; margin-top: 5px; }
.caption { display: flex; width: 110px; height: 17px; margin-left: auto; border: 1px solid #8494ad; border-top: 0; border-radius: 0 0 4px 4px; overflow: hidden; }
.caption button { flex: 30; display: grid; place-items: center; border: 0; border-right: 1px solid #8494ad; background: rgba(120, 145, 185, .3); }
.caption button:last-child { flex: 51; border: 0; }
.caption button:disabled { opacity: .5; }
.caption svg { width: 18px; height: 12px; }
.caption.lit button { background: linear-gradient(#a8c4e8, #4a72ac 50%, #6f98d0); }
.caption .red { background: linear-gradient(#e0988c, #b8301c 50%, #d05840) !important; }

/* form controls */
select { appearance: none; width: 100%; height: 20px; padding-left: 4px; border: 2px solid; border-color: #7c7c7c #fff #fff #7c7c7c; color: #000; background: #fff url("data:image/svg+xml,%3Csvg xmlns='http://www.w3.org/2000/svg' viewBox='0 0 17 17'%3E%3Cpath d='M0 0h17v17H0z' fill='%23777'/%3E%3Cpath d='M0 0h15v15H0z' fill='%23fff'/%3E%3Cpath d='M1 1h14v14H1z' fill='%23f0f0f0'/%3E%3Cpath d='M4 6h8l-4 5z'/%3E%3C/svg%3E") right / 17px 100% no-repeat; }
.val, .num { width: 100%; min-width: 0; height: 18px; border: 2px solid; border-color: #7c7c7c #fdfdfd #fdfdfd #7c7c7c; background: #fff; text-align: center; }
.val { font-weight: bold; font-size: 12px; color: #6d6d6d; }
.val.start { text-align: left; }
.btn { border: 2px solid; border-color: #fff #7c7c7c #7c7c7c #fff; background: #f0f0f0; }
.btn:disabled { color: #a4a4a4; text-shadow: 1px 1px #fff; }
input[type=checkbox] { appearance: none; display: grid; place-items: center; width: 18px; height: 18px; border: 2px solid; border-color: #7c7c7c #eee #eee #7c7c7c; background: #fff; }
input[type=checkbox]:checked::before { content: ""; width: 10px; height: 9px; background: #000; clip-path: polygon(0 40%, 25% 50%, 35% 65%, 100% 0, 100% 30%, 40% 100%, 25% 100%, 0 70%); }
input[type=radio] { appearance: none; display: grid; place-items: center; width: 15px; height: 15px; border: 2px solid; border-color: #7c7c7c #fff #fff #7c7c7c; border-radius: 50%; background: #fff; }
input[type=radio]:checked::before { content: ""; width: 8px; height: 8px; border-radius: 50%; background: #000; }
.cut { display: grid; align-content: center; height: 18px; overflow: hidden; }
.group { margin-top: 6px; border: 1px solid #a8a8a8; box-shadow: inset -1px -1px #fff; }

/* unit details */
.unit { flex: 1; min-height: 0; display: grid; grid-template: auto minmax(0, 1fr) / 242fr 1010fr; gap: 5px 9px; padding: 1px 8px 2px; }
.one { padding: 8px 16px 12px; }
.one legend { margin-left: -7px; }
.top-right { display: grid; grid-template-columns: 659fr 342fr; gap: 9px; }
.ships { display: flex; flex-direction: column; padding: 5px 8px 4px; min-height: 0; }
.sorts { display: flex; gap: 17px; padding-left: 3px; height: 22px; }
.sorts label { display: flex; gap: 6px; align-items: center; height: 18px; }
.listbox { flex: 1; min-height: 0; border: 2px solid; border-color: #7c7c7c #fff #fff #7c7c7c; background: #fff; }
.listbox ul { display: grid; grid-auto-rows: 1fr; height: 258px; }
.listbox li { padding-left: 2px; }
.selected { background: #39f; color: #fff; }
.filters { display: flex; justify-content: space-between; padding-top: 8px; }
.filters label { display: flex; align-items: center; gap: 7px; padding-left: 3px; }
.filters label + label { gap: 28px; }
.details { display: flex; flex-direction: column; gap: 9px; min-width: 0; min-height: 0; }
.info { display: grid; grid-template-columns: 309fr 167fr 166fr 158fr 175fr; gap: 9px; }
.info fieldset legend { margin-left: 2px; }
.rows { padding: 11px 16px 12px 7px; }
.group.rows { padding-top: 17px; }
.rows label { display: grid; grid-template-columns: 92fr 50fr; height: 20px; line-height: 18px; white-space: nowrap; }
.rows label + label { margin-top: 5px; }
.basic label { grid-template-columns: 76fr 207fr; }
.upkeep label { grid-template-columns: 50fr 84fr; }
.tall .val { height: 20px; }
.stack { display: flex; flex-direction: column; gap: 5px; }
.blank { flex: 1; margin-top: 10px; }
.mother { display: grid; gap: 8px; padding: 11px 16px 11px; }
.info .mother legend, .info .parasite legend { margin-left: -7px; }
.parasite { flex: 1; display: grid; grid-template-columns: 1fr 1fr; grid-auto-rows: 26px; gap: 7px 21px; padding: 12px 12px 0 16px; }

/* tab sets */
.tabset { flex: 1; min-height: 0; display: flex; flex-direction: column; }
.tabs { display: flex; }
.tabs button { flex: 1 1 0; height: 21px; border: 1px solid #7c7c7c; border-bottom-color: #a0a0a0; border-radius: 5px 5px 0 0; corner-shape: bevel; background: #f0f0f0; box-shadow: inset 1px 1px #fff; white-space: nowrap; }
.tabs button.on { font-weight: bold; font-size: 12px; border-bottom-color: #f0f0f0; }
.inset1 { margin-left: 10px; }
.inset2 { margin-left: 20px; }
.deck { flex: 1; min-height: 0; display: flex; }
.sheet { flex: 1; min-width: 0; min-height: 0; display: flex; flex-direction: column; }
.page { flex: 1; min-height: 0; border: solid #8c8c8c; border-width: 0 3px 3px 1px; background: #f0f0f0; }
.edge { width: 10px; margin-bottom: 21px; border: solid #8c8c8c; border-width: 0 2px 2px 0; background: #f0f0f0; }
.combat { padding: 8px 11px 14px 15px; }
.combat fieldset { height: 100%; padding: 12px 15px 15px; }
.combat legend { margin-left: -7px; }
.report { display: flex; height: 100%; border: 2px solid; border-color: #7c7c7c #fff #fff #7c7c7c; background: #fff; }
.report ul { flex: 1; display: grid; grid-auto-rows: 1fr; height: 334px; padding-left: 1px; font-size: 14px; line-height: 17px; white-space: pre; }
.scroll { width: 17px; display: flex; flex-direction: column; align-items: center; background: #ececec; padding: 6px 0; gap: 6px; }
.thumb { flex: 241; width: 15px; border: 1px solid #999; border-radius: 2px; background: linear-gradient(90deg, #f4f4f4, #c8c8cc); }
.report .scroll::after { content: ""; flex: 94; order: 1; }
.report .down { order: 2; }
.up, .down { width: 8px; height: 5px; background: #444; clip-path: polygon(50% 0, 100% 100%, 0 100%); }
.down { clip-path: polygon(0 0, 100% 0, 50% 100%); }

/* system map */
.map { background: #00003f; }
.chart { position: absolute; inset: 0; width: 100%; height: auto; }
.chart text { white-space: pre; }
.chart > g > text { font-size: 11px; }
.map > .titlebar, .space { position: relative; }
.sky { height: 23px; border-color: #b4cdec; background: linear-gradient(#3668b4, #3a6cb2 70%, #3462a4); padding-right: 2px; }
.lit { height: 20px; }
.space { padding: 7px 0 0 9px; }
.bar-row { display: grid; grid-template-columns: 1128fr 84fr 204fr; height: 44px; }
.toolbar { display: flex; border: solid #fff; border-width: 3px 1px 1px; }
.toolbar button { flex: 1 1 0; min-width: 0; display: grid; place-items: center; border: 2px solid; border-color: #e4e4e4 #808080 #808080 #f4f4f4; background: #00c000; }
.toolbar svg { width: 33px; height: 33px; }
.turns { display: flex; flex-direction: column; gap: 5px; padding: 1px 0 0 8px; color: #e4e432; }
.turns label { display: flex; justify-content: space-between; align-items: center; }
.inc { width: 27px; height: 20px; border: 2px solid; border-color: #777 #fff #fff #777; background: #00c000; color: #002800; font-weight: bold; text-align: center; }
.controls { display: grid; grid-template-columns: 135fr 134fr 936fr 188fr; column-gap: 8px; align-items: start; padding-top: 7px; }
.frame { border: 2px solid #d4d4dc; box-shadow: none; padding: 2px 7px 6px 6px; }
.frame legend { padding: 0 4px; font-weight: bold; font-size: 12px; line-height: 15px; color: #ff0; }
.pad { padding: 10px 13px 15px 14px; }
.pad legend { margin-left: -7px; }
.cross { display: grid; grid-template-columns: 34px 34px 34px; grid-auto-rows: 34px; }
.cross button { padding: 0; border: 2px solid; border-color: #eee #777 #777 #eee; background: #c0c0c0; }
.n, .s { grid-column: 2; }
.w { grid-column: 1; }
.e { grid-column: 3; outline: 1px dotted #000; outline-offset: -4px; }
.zoom { display: flex; align-items: center; }
.lenses button { display: grid; place-items: center; width: 51px; height: 51px; border: 2px solid; border-color: #fff #999 #999 #fff; background: #f0f0f0; }
.lenses svg { width: 34px; height: 34px; }
.green { border: 2px solid; border-color: #e4e4e4 #808080 #808080 #f4f4f4; background: #00c000; color: #001c00; font-weight: bold; font-size: 12px; white-space: nowrap; }
.zoom .green { width: 51px; height: 51px; line-height: 14px; }
.times { display: grid; gap: 7px; }
.eleven { display: grid; grid-template-columns: repeat(11, 1fr); grid-auto-rows: 26px; }
.auto { color: #e4e432; text-align: center; }
.scale { padding-top: 6px; color: #00d000; }
.scale p:first-child { width: 138px; margin-bottom: 3px; padding-bottom: 1px; border-bottom: 1px solid #00d000; }
.side { display: flex; flex-direction: column; width: 276px; margin-top: 3px; padding: 9px 4px 13px 5px; border: 2px solid #d4d4dc; background: #00003f; }
.side > select { width: auto; height: 22px; margin: 0 2px 3px 1px; }
.display { display: grid; grid-template-columns: 1fr 1fr; gap: 9px; padding: 12px 7px 17px 6px; align-content: start; }
.wide { grid-column: 1 / -1; }
.checks { padding: 3px 6px 7px 9px; }
.checks > div { display: grid; grid-template-rows: repeat(5, 1fr); height: 84px; }
.checks label { display: flex; justify-content: space-between; align-items: center; min-height: 0; overflow: hidden; }
.checks input { height: 100%; }
.checks .cut { height: 17px; }
.display .orbit { padding: 6px 16px 9px; }
.orbit legend, .options legend { margin-left: -7px; }
.display .options { padding: 3px 16px 8px 18px; }
.options > div { grid-template-rows: repeat(10, 1fr); height: 168px; }
.options legend { margin-left: -9px; }

/* right monitor: messenger windows behind the event log */
.right { background: #f4f7fc; }
.behind { position: absolute; left: 1px; width: 60px; border-left: 7px solid #a9c6ef; background: #fff; outline: 1px solid #4c6488; }
.one-up { top: 1px; height: 402px; border-top: 29px solid #44587a; border-bottom: 7px solid #a9c6ef; }
.one-up div { height: 22px; background: #dfe5f3; }
.two-up { top: 404px; height: 342px; border-bottom: 7px solid #a9c6ef; }
.buddy, .talk { position: absolute; left: 76.9%; font-family: "Open Sans", "Noto Sans", sans-serif; font-size: 12px; }
.buddy { right: 2px; top: 3px; bottom: 75px; border: solid #9dbbe6; border-width: 0 6px 6px 0; outline: 1px solid #26364c; background: #fff; }
.buddy .titlebar { height: 29px; margin-right: -6px; padding: 0 5px 0 15px; }
.buddy .caption, .talk .caption { height: 20px; }
.menu { display: flex; gap: 9px; height: 22px; border-bottom: 1px solid #b4b8c8; background: linear-gradient(#fff, #d4dbed 50%, #e2e8f5); line-height: 21px; }
.menu a { color: #000; text-decoration: none; }
.buddy h2 { height: 19px; padding-left: 8px; font-size: 12px; line-height: 19px; }
.buddy h2 span { font-weight: normal; }
.buddy .ruled { height: 20px; border-bottom: 1px solid #999; line-height: 20px; }
.chan { padding-left: 16px; line-height: 25px; }
.people { padding: 3px 1px 0 16px; color: #6c6c6c; line-height: 16px; }
.people li { height: 34px; }
.people small { display: block; font-size: 10px; line-height: 14px; }
.pic { display: flex; justify-content: space-between; align-items: center; }
.pic svg { width: 22px; height: 17px; }
.talk { right: 9px; top: 345px; bottom: 4px; display: flex; flex-direction: column; border: solid #a9c6ef; border-width: 0 7px 7px 0; outline: 1px solid #3c4c64; background: #fff; }
.pale { height: 30px; background: linear-gradient(#b4c8ea, #bdd2f4); }
.pale .caption button { background: rgba(255, 255, 255, .15); }
.talk .pane { flex: 1; display: flex; flex-direction: column; min-height: 0; }
.menubar { height: 22px; border-bottom: 1px solid #8c8c9c; background: linear-gradient(#fff, #d4dbed 50%, #e2e8f5); }
.room { flex: 1; display: flex; gap: 5px; margin-top: 31px; padding-right: 6px; min-height: 0; }
.log { flex: 1; display: flex; border-top: 1px solid #999; }
.lines { flex: 1; padding: 10px 0 0 16px; font-size: 11px; line-height: 18px; white-space: nowrap; }
.lines p:nth-child(2) { margin-top: 20px; }
.lines p:nth-child(3) { margin-top: 2px; }
.lines p:nth-child(4) { margin-top: 45px; }
.lines p:nth-child(5) { margin-top: 5px; }
.log .scroll { padding: 8px 0; gap: 18px; }
.who { width: 86px; display: flex; flex-direction: column; }
.who p { line-height: 22px; white-space: nowrap; }
.who ul { flex: 1; border: 1px solid #999; padding: 4px 2px; }
.who li { display: flex; gap: 3px; align-items: center; color: #3c5a94; line-height: 20px; }
.who svg { width: 11px; height: 13px; }
.tools { height: 27px; margin: 5px 6px 0 0; border: solid #999; border-width: 1px 0; }
.entry { height: 49px; }

/* event updates */
.events { position: absolute; left: 20px; top: 0; width: 76.6%; }
.updates { flex: 1; min-height: 0; overflow: hidden; padding: 1px 9px 0; }
.heads { display: grid; grid-template-columns: 292fr 209fr 158fr 117fr 194fr; gap: 8px; margin-bottom: 5px; }
.heads fieldset { height: 54px; }
.count { display: flex; gap: 9px; padding: 5px 15px 0 16px; }
.count legend { margin-left: -7px; }
.count .num { height: 19px; margin-top: 3px; color: #000; }
.count .btn { flex: none; width: 84px; height: 26px; white-space: nowrap; }
.view { display: grid; grid-template-columns: 51fr 57fr; gap: 3px 15px; align-content: start; padding: 3px 16px 0 17px; }
.view legend { margin-left: -9px; }
.view label { display: flex; justify-content: space-between; align-items: center; height: 14px; overflow: hidden; }
.view .cut { height: 14px; }
.full { grid-column: 1 / -1; }
.flags { padding: 8px 42px 0 44px; }
.flags label { display: flex; justify-content: space-between; align-items: center; height: 17px; }
.gridbox { display: flex; border: 2px solid; border-color: #7c7c7c #fff #fff #7c7c7c; }
table { flex: 1; display: block; border-right: 5px solid #7c7c7c; background: #fff; }
thead { display: block; }
tr { display: grid; grid-template-columns: 174fr 146fr 104fr 542fr; }
th { height: 33px; padding-left: 4px; border-right: 1px solid #222; border-bottom: 2px solid #222; background: #f0f0f0; text-align: left; font-weight: normal; line-height: 32px; }
th:last-child { border-right-color: #f0f0f0; }
tbody { display: grid; grid-auto-rows: 1fr; height: 636px; }
td { display: grid; align-content: center; min-width: 0; padding-left: 4px; border: solid #c4c4c4; border-width: 0 1px 1px 0; white-space: pre; overflow: hidden; line-height: 14px; }
.t { background: #efefef; }
.d { grid-row: span 2; }
.classic { width: 18px; background: #f8f8f8; }
.classic .btn { display: grid; place-items: center; width: 18px; height: 18px; }
.classic .up { background: #000; }
```
